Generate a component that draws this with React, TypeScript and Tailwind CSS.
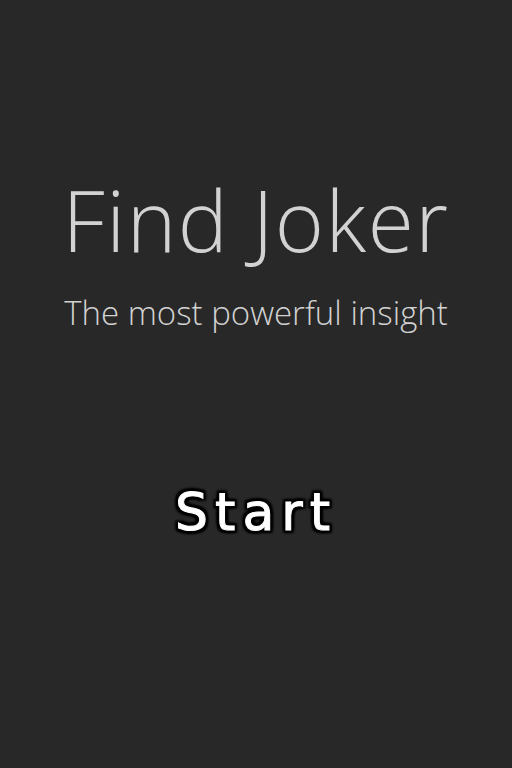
export default function App() {
  return (
    <div className="w-[512px] h-[768px] bg-[#282828] flex flex-col items-center overflow-hidden">
      <h1 className="mt-[178px] text-[84px] leading-none text-[#d2d2d2] font-light tracking-[1.5px] font-['Open_Sans',sans-serif]">
        Find Joker
      </h1>
      <p className="mt-[34px] text-[33px] leading-none text-[#d2d2d2] font-light font-['Open_Sans',sans-serif]">
        The most powerful insight
      </p>
      <button className="mt-[157px] text-[52px] leading-none text-white tracking-[7px] font-['DejaVu_Sans',Verdana,sans-serif] [-webkit-text-stroke:1px_#fff] [text-shadow:0_0_2px_#000,3px_3px_2px_#000,-3px_-3px_2px_#000,3px_-3px_2px_#000,-3px_3px_2px_#000,0_3px_2px_#000,0_-3px_2px_#000,3px_0_2px_#000,-3px_0_2px_#000]">
        Start
      </button>
    </div>
  );
}
